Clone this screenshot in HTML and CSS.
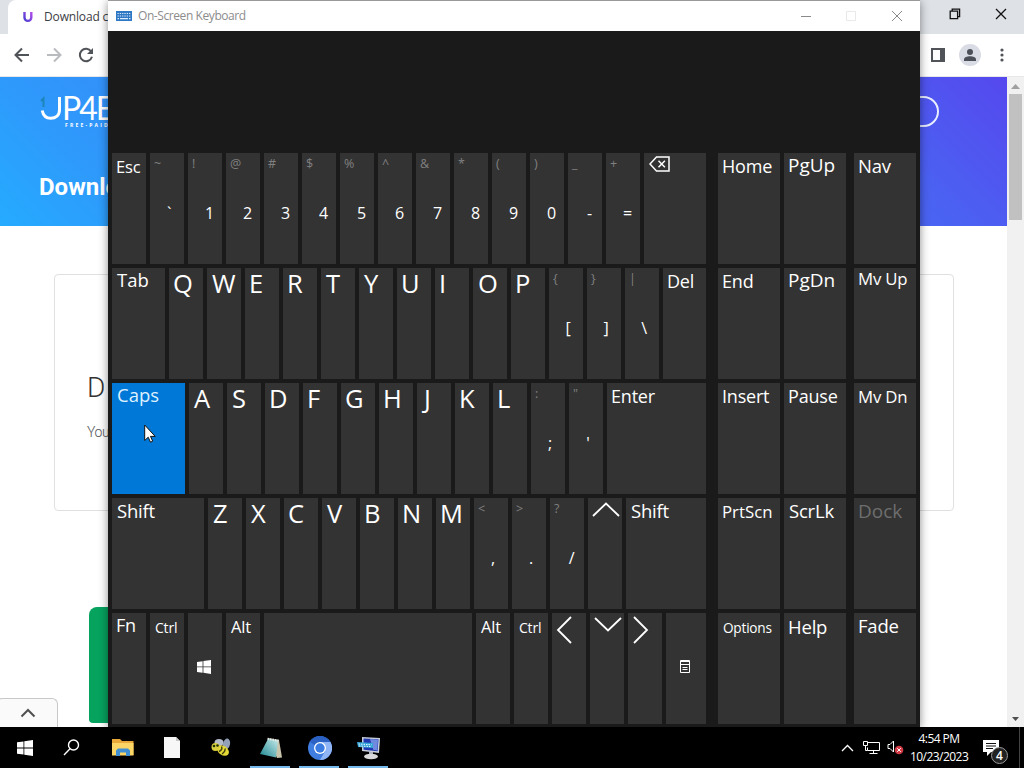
FILE: index.html
```html
<!DOCTYPE html>
<html lang="en">

<head>
  <meta charset="UTF-8">
  <meta name="viewport" content="width=device-width, initial-scale=1">
  <title>On-Screen Keyboard</title>
  <link rel="stylesheet" href="styles.css">
</head>

<body>

  <div class="desktop">

    <!-- Browser -->
    <div class="browser">
      <div class="tab-strip">
        <div class="tab">
          <svg width="10" height="12" viewBox="0 0 10 12">
            <defs>
              <linearGradient id="fav" x1="0" y1="1" x2="1" y2="0">
                <stop offset="0" stop-color="#4a3fd0"/>
                <stop offset="1" stop-color="#b04ae8"/>
              </linearGradient>
            </defs>
            <path d="M1.5 1v5.500a3.400 3.400 0 0 0 6.800 0V1" fill="none" stroke="url(#fav)" stroke-width="2.400"/>
          </svg>
          <span>Download c</span>
        </div>
        <div class="win-buttons">
          <svg width="12" height="12" viewBox="0 0 12 12" fill="none" stroke="#111" stroke-width="1.300">
            <path d="M1.200 3.200h7.400v7.400H1.200zM3.200 3V1.200h7.400v7.400H8.800"/>
          </svg>
          <svg width="12" height="12" viewBox="0 0 12 12" fill="none" stroke="#111" stroke-width="1.300">
            <path d="M1 1l10 10M11 1L1 11"/>
          </svg>
        </div>
      </div>

      <div class="toolbar">
        <svg width="16" height="16" viewBox="0 0 16 16" fill="none" stroke="#505357" stroke-width="2">
          <path d="M15 8H2M8 1.500L1.500 8L8 14.500"/>
        </svg>
        <svg width="16" height="16" viewBox="0 0 16 16" fill="none" stroke="#b9bbbe" stroke-width="2">
          <path d="M1 8h13M8 1.500L14.500 8L8 14.500"/>
        </svg>
        <svg width="16" height="16" viewBox="0 0 16 16">
          <path d="M13.200 4.500A6.200 6.200 0 1 0 14 9.800" fill="none" stroke="#505357" stroke-width="2"/>
          <path d="M15 1v6H9z" fill="#505357"/>
        </svg>
        <div class="toolbar-right">
          <svg width="14" height="14" viewBox="0 0 14 14">
            <path d="M1 1h12v12H1z" fill="none" stroke="#505357" stroke-width="2"/>
            <path d="M9 1h4v12H9z" fill="#505357"/>
          </svg>
          <svg width="22" height="22" viewBox="0 0 22 22">
            <circle cx="11" cy="11" r="11" fill="#d9dce4"/>
            <circle cx="11" cy="8" r="3" fill="#4b4f58"/>
            <path d="M5 17v-1.500c0-2.300 3-3.300 6-3.300s6 1 6 3.300V17z" fill="#4b4f58"/>
          </svg>
          <svg width="4" height="14" viewBox="0 0 4 14" fill="#505357">
            <circle cx="2" cy="2" r="1.600"/><circle cx="2" cy="7" r="1.600"/><circle cx="2" cy="12" r="1.600"/>
          </svg>
        </div>
      </div>

      <div class="viewport">
        <div class="page">
          <div class="hero">
            <div class="hero-top">
              <div class="logo">
                <svg width="22" height="26" viewBox="0 0 22 26" fill="none" stroke-width="3">
                  <path d="M1 6l2.500-2.500V12" stroke="#1c86b8" stroke-width="2"/>
                  <path d="M2.200 15.500c1 5 4 7.800 8.500 7.800 5 0 8.800-3 8.800-8.500V2" stroke="#fff"/>
                </svg>
                <span class="logo-text">P4E</span>
                <span class="logo-sub">FREE-PAID</span>
              </div>
              <div class="pill"></div>
            </div>
            <h1>Downlo</h1>
          </div>
          <div class="card">
            <h2>D</h2>
            <p>You</p>
          </div>
          <div class="banner"></div>
        </div>
        <div class="scrollbar">
          <svg width="9" height="5" viewBox="0 0 9 5"><path d="M0 5L4.500 0L9 5z" fill="#a0a0a0"/></svg>
          <div class="thumb"></div>
          <svg width="7" height="4" viewBox="0 0 7 4"><path d="M0 0h7L3.500 4z" fill="#505050"/></svg>
        </div>
      </div>
      <div class="shelf">
        <svg width="16" height="10" viewBox="0 0 16 10"><path d="M1.500 8.500L8 2l6.500 6.500" fill="none" stroke="#505050" stroke-width="2"/></svg>
      </div>
    </div>

    <!-- Keyboard window -->
    <div class="osk">
      <div class="titlebar">
        <svg width="16" height="10" viewBox="0 0 16 10">
          <rect width="16" height="10" fill="#2f78c4"/>
          <path d="M1.500 2.500h13M1.500 5h13" stroke="#dcecff" stroke-width="1.200" stroke-dasharray="1.300 1"/>
          <path d="M1.500 7.700h1.500M4 7.700h8M13 7.700h1.500" stroke="#dcecff" stroke-width="1.200"/>
        </svg>
        <span>On-Screen Keyboard</span>
        <div class="osk-buttons">
          <svg width="12" height="12" viewBox="0 0 12 12" fill="none" stroke="#8a8a8a"><path d="M2 6.500h10"/></svg>
          <svg width="12" height="12" viewBox="0 0 12 12" fill="none" stroke="#e9e9e9"><path d="M1.500 1.500h9v9h-9z"/></svg>
          <svg width="12" height="12" viewBox="0 0 12 12" fill="none" stroke="#8a8a8a"><path d="M1 1l10 10M11 1L1 11"/></svg>
        </div>
      </div>

      <div class="keys">
        <div class="main-keys">
          <div class="row">
            <div class="key esc">Esc</div>
            <div class="key dual punct"><i>~</i><b>`</b></div>
            <div class="key dual"><i>!</i><b>1</b></div>
            <div class="key dual"><i>@</i><b>2</b></div>
            <div class="key dual"><i>#</i><b>3</b></div>
            <div class="key dual"><i>$</i><b>4</b></div>
            <div class="key dual"><i>%</i><b>5</b></div>
            <div class="key dual"><i>^</i><b>6</b></div>
            <div class="key dual"><i>&amp;</i><b>7</b></div>
            <div class="key dual"><i>*</i><b>8</b></div>
            <div class="key dual"><i>(</i><b>9</b></div>
            <div class="key dual"><i>)</i><b>0</b></div>
            <div class="key dual"><i>_</i><b>-</b></div>
            <div class="key dual"><i>+</i><b>=</b></div>
            <div class="key fill icon-bksp">
              <svg width="21" height="16" viewBox="0 0 21 16" fill="none" stroke="#fff" stroke-width="1.500">
                <path d="M7.500 1H20v14H7.500L1 8z"/><path d="M9.500 4.800l6.400 6.400M15.900 4.800l-6.400 6.400"/>
              </svg>
            </div>
          </div>

          <div class="row">
            <div class="key w-tab lg in">Tab</div>
            <div class="key letter">Q</div>
            <div class="key letter t">W</div>
            <div class="key letter">E</div>
            <div class="key letter">R</div>
            <div class="key letter t">T</div>
            <div class="key letter t">Y</div>
            <div class="key letter">U</div>
            <div class="key letter">I</div>
            <div class="key letter t">O</div>
            <div class="key letter">P</div>
            <div class="key dual punct"><i>{</i><b>[</b></div>
            <div class="key dual punct"><i>}</i><b>]</b></div>
            <div class="key dual punct"><i>|</i><b>\</b></div>
            <div class="key fill">Del</div>
          </div>

          <div class="row">
            <div class="key w-caps lg in active">Caps</div>
            <div class="key letter t">A</div>
            <div class="key letter t">S</div>
            <div class="key letter">D</div>
            <div class="key letter">F</div>
            <div class="key letter">G</div>
            <div class="key letter">H</div>
            <div class="key letter j">J</div>
            <div class="key letter">K</div>
            <div class="key letter">L</div>
            <div class="key dual punct"><i>:</i><b>;</b></div>
            <div class="key dual punct"><i>"</i><b>'</b></div>
            <div class="key fill">Enter</div>
          </div>

          <div class="row">
            <div class="key w-shift lg in">Shift</div>
            <div class="key letter t">Z</div>
            <div class="key letter t">X</div>
            <div class="key letter">C</div>
            <div class="key letter t">V</div>
            <div class="key letter">B</div>
            <div class="key letter">N</div>
            <div class="key letter">M</div>
            <div class="key dual punct"><i>&lt;</i><b>,</b></div>
            <div class="key dual punct"><i>&gt;</i><b>.</b></div>
            <div class="key dual"><i>?</i><b>/</b></div>
            <div class="key icon-up">
              <svg width="28" height="15" viewBox="0 0 28 15"><path d="M1 14L14 1.500L27 14"/></svg>
            </div>
            <div class="key fill lg in">Shift</div>
          </div>

          <div class="row">
            <div class="key fn">Fn</div>
            <div class="key sm">Ctrl</div>
            <div class="key icon-win">
              <svg width="14" height="14" viewBox="0 0 14 14" fill="#fff">
                <path d="M0 2l5.600-.8v5.300H0zM6.400 1.100L14 0v6.500H6.400zM0 7.300h5.600v5.400L0 12zM6.400 7.300H14V14l-7.600-1.200z"/>
              </svg>
            </div>
            <div class="key alt in">Alt</div>
            <div class="key w-space"></div>
            <div class="key alt in">Alt</div>
            <div class="key sm">Ctrl</div>
            <div class="key icon-left">
              <svg width="16" height="28" viewBox="0 0 16 28"><path d="M15 1L2 14l13 13"/></svg>
            </div>
            <div class="key icon-down">
              <svg width="28" height="15" viewBox="0 0 28 15"><path d="M1 1l13 12.500L27 1"/></svg>
            </div>
            <div class="key icon-right">
              <svg width="16" height="28" viewBox="0 0 16 28"><path d="M1 1l13 13L1 27"/></svg>
            </div>
            <div class="key fill icon-menu">
              <svg width="10" height="13" viewBox="0 0 10 13" fill="none" stroke="#fff">
                <path d="M.5.5h9v12h-9zM0 1.500h10M0 4.500h10M2.500 7.500h5M2.500 9.500h5"/>
              </svg>
            </div>
          </div>
        </div>

        <div class="nav-keys">
          <div class="key">Home</div>
          <div class="key xl">PgUp</div>
          <div class="key">End</div>
          <div class="key xl">PgDn</div>
          <div class="key">Insert</div>
          <div class="key">Pause</div>
          <div class="key md prt">PrtScn</div>
          <div class="key lg in">ScrLk</div>
          <div class="key xs">Options</div>
          <div class="key help">Help</div>
        </div>

        <div class="side-keys">
          <div class="key lg">Nav</div>
          <div class="key md up">Mv Up</div>
          <div class="key md">Mv Dn</div>
          <div class="key xl disabled">Dock</div>
          <div class="key lg">Fade</div>
        </div>
      </div>
    </div>

    <svg class="cursor" width="12" height="19" viewBox="0 0 12 19">
      <path d="M.7 1v15.500l3.500-3.300 2.300 5 2.200-1-2.200-4.800h4.700z" fill="#fff" stroke="#111" stroke-width="1"/>
    </svg>

    <!-- Taskbar -->
    <div class="taskbar">
      <div class="task">
        <svg width="16" height="16" viewBox="0 0 16 16" fill="#fff">
          <path d="M0 2.300l6.500-.9v6.100H0zM7.300 1.200L16 0v7.500H7.300zM0 8.400h6.500v6.200L0 13.700zM7.300 8.400H16V16l-8.700-1.200z"/>
        </svg>
      </div>
      <div class="task search">
        <svg width="17" height="17" viewBox="0 0 17 17" fill="none" stroke="#fff" stroke-width="1.400">
          <circle cx="10.500" cy="6" r="5"/><path d="M7 9.800L1 16"/>
        </svg>
      </div>
      <div class="task">
        <svg width="22" height="19" viewBox="0 0 22 19">
          <path d="M0 1h8l2 2h11.500v14H0z" fill="#e9a93a"/>
          <path d="M0 5h21.500v12.500H0z" fill="#fbd667"/>
          <path d="M4 18v-5.500L6 10.500h10l2 2V18h-4v-3.500H8V18z" fill="#3f8fd2"/>
        </svg>
      </div>
      <div class="task">
        <svg width="16" height="21" viewBox="0 0 16 21">
          <path d="M0 0h12l4 4v17H0z" fill="#f7f7f7"/><path d="M12 0v4h4" fill="#c9c9c9"/>
        </svg>
      </div>
      <div class="task">
        <svg width="20" height="19" viewBox="0 0 20 19">
          <ellipse cx="8" cy="4.500" rx="4.500" ry="3.500" fill="#b4bccb"/>
          <ellipse cx="15.500" cy="6" rx="3.500" ry="5.500" transform="rotate(12 15.500 6)" fill="#93a0b8"/>
          <ellipse cx="12" cy="12.500" rx="6.500" ry="4.500" transform="rotate(35 12 12.500)" fill="#e5d935"/>
          <path d="M10.500 8.500c1 2-.5 4-2.500 5M14 10.500c.5 2-1 4-3 5.500" fill="none" stroke="#3e3c12" stroke-width="1.400"/>
          <circle cx="4.500" cy="9" r="4" fill="#d7cf3e"/>
          <circle cx="3" cy="8" r="1.300" fill="#26330f"/><circle cx="6.500" cy="7.500" r="1.300" fill="#26330f"/>
        </svg>
      </div>
      <div class="task open">
        <svg width="22" height="22" viewBox="0 0 22 22">
          <defs>
            <linearGradient id="note" x1="0" y1="1" x2="1" y2="0">
              <stop offset="0" stop-color="#1b8690"/>
              <stop offset="1" stop-color="#c7eaea"/>
            </linearGradient>
          </defs>
          <path d="M8 1l11 2 3 17.500-5 .5z" fill="#c9c5ac"/>
          <path d="M8 2l10 1.500-2 17L0 17z" fill="url(#note)"/>
          <path d="M7.500 1.800l11 1.700" stroke="#e7eceb" stroke-width="2" stroke-dasharray="1.500 1"/>
        </svg>
      </div>
      <div class="task open">
        <svg width="24" height="24" viewBox="0 0 24 24">
          <circle cx="12" cy="12" r="12" fill="#3f7de0"/>
          <path d="M12 6h10.400A12 12 0 0 1 12 24l5.200-9z" fill="#8fb5f6"/>
          <path d="M1.600 6A12 12 0 0 1 22.400 6H12L6.800 9z" fill="#2b62c4"/>
          <circle cx="12" cy="12" r="6" fill="#fff"/>
          <circle cx="12" cy="12" r="4.700" fill="#3b7ce2"/>
        </svg>
      </div>
      <div class="task open">
        <svg width="24" height="24" viewBox="0 0 24 24">
          <path d="M5 1l18 1-1 15-17-2z" fill="#c9cfdd"/>
          <path d="M6.500 2.500l15 .8-.9 12-14-1.500z" fill="#2238b0"/>
          <path d="M13 3l8 .4-.7 11-4-.6z" fill="#708ae0"/>
          <path d="M12 16h4v4h-4z" fill="#aeb4c2"/>
          <ellipse cx="14" cy="20.500" rx="7" ry="2.800" fill="#d8d8da"/>
          <path d="M0 6l16 1v5L1 11z" fill="#36a5d8"/>
          <path d="M1.500 8l13 .8M2 10l12 .6" stroke="#e3f6ff" stroke-dasharray="1.500 1"/>
        </svg>
      </div>

      <div class="tray">
        <svg width="13" height="8" viewBox="0 0 13 8" fill="none" stroke="#fff" stroke-width="1.300"><path d="M1 7l5.500-5.500L12 7"/></svg>
        <svg width="17" height="14" viewBox="0 0 17 14" fill="none" stroke="#fff">
          <path d="M5 1.500h11.500v8H4.500v-3M10.500 9.500v3M6.500 12.500h8M.5.5h4v4h-4zM2.500 4.500v5h2"/>
        </svg>
        <svg width="17" height="15" viewBox="0 0 17 15">
          <path d="M1 4.500h2L6.500 1v11L3 8.500H1z" fill="none" stroke="#fff"/>
          <circle cx="12" cy="10" r="4.300" fill="#d33a45"/>
          <path d="M10.200 8.200l3.600 3.600M13.800 8.200l-3.600 3.600" stroke="#fff"/>
        </svg>
        <div class="clock">
          <div>4:54 PM</div>
          <div>10/23/2023</div>
        </div>
        <div class="notify">
          <svg width="16" height="16" viewBox="0 0 16 16">
            <path d="M0 0h16v12H8l-4 4v-4H0z" fill="#fff"/><path d="M3 3.500h10M3 6h10M3 8.500h7" stroke="#111"/>
          </svg>
          <span class="count">4</span>
        </div>
        <div class="show-desktop"></div>
      </div>
    </div>

  </div>

</body>

</html>
```
FILE: styles.css
```css
* {
  box-sizing: border-box;
}

body {
  margin: 0;
  font-family: "Open Sans", "Noto Sans", sans-serif;
  overflow: hidden;
}

h1,
h2,
p {
  margin: 0;
}

svg {
  display: block;
  flex: none;
}

.desktop {
  position: relative;
  width: 1024px;
  height: 768px;
  display: flex;
  flex-direction: column;
  background: #000;
  overflow: hidden;
}

/* browser */
.browser {
  position: relative;
  height: 727px;
  display: flex;
  flex-direction: column;
  background: #fff;
}

.tab-strip {
  height: 34px;
  display: flex;
  justify-content: space-between;
  padding-left: 8px;
  background: #dee1e6;
}

.tab {
  width: 240px;
  display: flex;
  align-items: center;
  gap: 11px;
  padding: 0 0 1px 15px;
  background: #fff;
  border-radius: 8px 8px 0 0;
  font-size: 12px;
  letter-spacing: -0.15px;
  color: #3c4043;
}

.win-buttons {
  display: flex;
  gap: 34px;
  padding: 8px 17px 0 0;
}

.toolbar {
  height: 43px;
  display: flex;
  align-items: center;
  gap: 16px;
  padding: 0 20px 0 14px;
  border-bottom: 1px solid #e8e8ea;
}

.toolbar-right {
  display: flex;
  align-items: center;
  gap: 17px;
  margin-left: auto;
}

.toolbar-right svg:nth-child(2) {
  margin-left: -3px;
  margin-right: 2px;
}

.viewport {
  flex: 1;
  display: flex;
  min-height: 0;
}

.page {
  width: 1007px;
  overflow: hidden;
}

.hero {
  height: 149px;
  background: linear-gradient(45deg, #25abff 0%, #2f98fb 14%, #4b61f2 84%, #5548ee 100%);
  color: #fff;
}

.hero-top {
  display: flex;
  justify-content: space-between;
  padding: 18px 68px 0 40px;
  height: 92px;
}

.logo {
  display: grid;
  grid-template-columns: 22px 80px;
  grid-template-rows: 26px 10px;
}

.logo-text {
  font: 32px/26px "Lato", sans-serif;
  letter-spacing: -2px;
}

.logo-sub {
  grid-column: 1 / 3;
  padding-left: 25px;
  font-size: 5px;
  font-weight: 700;
  line-height: 8px;
  letter-spacing: 2.2px;
}

.pill {
  width: 140px;
  height: 31px;
  border: 2px solid #e8eeff;
  border-radius: 16px;
  margin-top: 1px;
}

.hero h1 {
  padding-left: 39px;
  font: 700 24px/36px Roboto, sans-serif;
}

.card {
  width: 900px;
  height: 237px;
  margin: 48px 0 0 54px;
  padding: 94px 0 0 32px;
  border: 1px solid #dfe0e2;
  border-radius: 4px;
  color: #333;
}

.card h2 {
  font: 300 28px/38px Roboto, sans-serif;
}

.card p {
  margin-top: 15px;
  font: 300 14px/20px Roboto, sans-serif;
  letter-spacing: -0.4px;
  color: #555;
}

.banner {
  width: 830px;
  height: 116px;
  margin: 96px 0 0 89px;
  background: #06a35f;
  border-radius: 8px 8px 0 4px;
}

.scrollbar {
  width: 17px;
  display: flex;
  flex-direction: column;
  align-items: center;
  padding: 7px 0 6px;
  background: #f1f1f1;
}

.thumb {
  width: 13px;
  height: 126px;
  margin: 5px 0 auto;
  background: #c1c1c1;
}

.shelf {
  position: absolute;
  left: -2px;
  bottom: 0;
  width: 60px;
  height: 29px;
  display: flex;
  justify-content: center;
  padding-top: 9px;
  background: #fafafa;
  border: 1px solid #c8c8c8;
  border-bottom: 0;
  border-radius: 4px 6px 0 0;
}

/* keyboard window */
.osk {
  position: absolute;
  left: 108px;
  top: 0;
  width: 812px;
  height: 727px;
  border-top: 1px solid #999;
  background: #1a1a1a;
  box-shadow: 0 2px 9px rgba(0, 0, 0, 0.45);
}

.titlebar {
  height: 30px;
  display: flex;
  align-items: center;
  gap: 6px;
  padding: 0 17px 1px 8px;
  background: #fff;
  color: #8c8c8c;
  font-size: 12px;
  letter-spacing: -0.42px;
}

.osk-buttons {
  display: flex;
  gap: 34px;
  margin-left: auto;
}

.keys {
  display: flex;
  padding: 122px 4px 0;
  color: #fff;
}

.main-keys {
  width: 594px;
  display: flex;
  flex-direction: column;
  gap: 4px;
}

.row {
  display: flex;
  gap: 4px;
}

.nav-keys {
  display: grid;
  grid-template-columns: 62px 62px;
  gap: 4px;
  margin-left: 12px;
}

.side-keys {
  display: grid;
  width: 62px;
  gap: 4px;
  margin-left: 8px;
}

.key {
  width: 34px;
  height: 111px;
  flex: none;
  padding: 2px 0 0 4px;
  background: #333;
  font-size: 18px;
  line-height: 22px;
  letter-spacing: -0.2px;
  white-space: nowrap;
}

.key.fill {
  flex: 1;
}

.nav-keys .key,
.side-keys .key {
  width: 62px;
}

.key.lg {
  font-size: 18.5px;
}

.key.xl {
  padding-top: 1px;
  font-size: 19px;
  letter-spacing: 0;
}

.key.help {
  padding-top: 3px;
  font-size: 18.5px;
}

.key.md {
  font-size: 16.8px;
  padding-top: 3px;
}

.key.md.prt {
  letter-spacing: 0;
}

.key.sm {
  font-size: 14px;
  padding: 4px 0 0 5px;
}

.key.xs {
  font-size: 13.6px;
  padding: 4px 0 0 5px;
}

.key.md.up {
  padding-top: 0;
}

.key.esc,
.key.alt {
  padding-top: 3px;
  font-size: 16.5px;
}

.key.fn {
  padding-top: 1px;
}

.key.in {
  padding-left: 5px;
}

.w-caps.in,
.w-tab.in {
  padding-top: 1px;
  letter-spacing: 0;
}

.key.disabled {
  padding-top: 2px;
  color: #6e6e6e;
}

.key.active {
  background: #0078d7;
  color: #dff1ff;
}

.key.w-tab {
  width: 53px;
}

.key.w-caps {
  width: 73px;
}

.key.w-shift {
  width: 92px;
}

.key.w-space {
  width: 208px;
}

.key.letter {
  padding-top: 0;
  font-size: 25.5px;
  line-height: 30px;
}

.key.letter.t {
  padding-left: 5px;
}

.key.letter.j {
  padding-left: 7px;
}

.key.dual {
  padding-top: 0;
}

.dual i,
.dual b {
  display: block;
  font-style: normal;
  font-weight: 400;
}

.dual i {
  height: 49px;
  font-size: 12.5px;
  line-height: 21px;
  color: #808080;
}

.dual b {
  padding-left: 5px;
  text-align: center;
  font-size: 16px;
}

.dual.punct b {
  padding: 0;
}

.icon-up path,
.icon-down path,
.icon-left path,
.icon-right path {
  fill: none;
  stroke: #fff;
  stroke-width: 1.8;
}

.key.icon-bksp {
  padding: 3px 0 0 5px;
}

.key.icon-up,
.key.icon-down {
  padding: 4px 0 0 4px;
}

.key.icon-left {
  padding: 3px 0 0 4px;
}

.key.icon-right {
  padding: 3px 0 0 5px;
}

.key.icon-win {
  padding: 47px 0 0 9px;
}

.key.icon-menu {
  padding: 47px 0 0 14px;
}

.cursor {
  position: absolute;
  left: 144px;
  top: 424px;
}

/* taskbar */
.taskbar {
  height: 41px;
  display: flex;
  gap: 1px;
  background: #000;
}

.task {
  width: 48px;
  display: flex;
  align-items: center;
  justify-content: center;
  padding: 2px 0 0 1px;
  border-bottom: 2px solid transparent;
}

.task.search {
  padding: 2px 3px 0 0;
}

.task.open {
  width: 40px;
  margin: 0 4px 0 5px;
  border-bottom-color: #76b9ed;
}

.task.open + .task.open {
  margin-left: 4px;
}

.tray {
  display: flex;
  align-items: center;
  margin-left: auto;
  color: #fff;
}

.tray svg + svg {
  margin-left: 9px;
}

.tray svg:nth-child(3) {
  margin-left: 7px;
}

.clock {
  width: 58px;
  margin-left: 6px;
  text-align: center;
  font-size: 12px;
  line-height: 18px;
  letter-spacing: -0.55px;
  white-space: nowrap;
}

.notify {
  position: relative;
  margin-left: 15px;
}

.count {
  position: absolute;
  left: 8px;
  top: 7px;
  width: 17px;
  height: 17px;
  border: 1px solid #999;
  border-radius: 50%;
  background: #222;
  text-align: center;
  font-size: 12px;
  font-weight: 600;
  line-height: 15px;
}

.show-desktop {
  width: 5px;
  height: 41px;
  margin-left: 20px;
  border-left: 1px solid #444;
}
```
